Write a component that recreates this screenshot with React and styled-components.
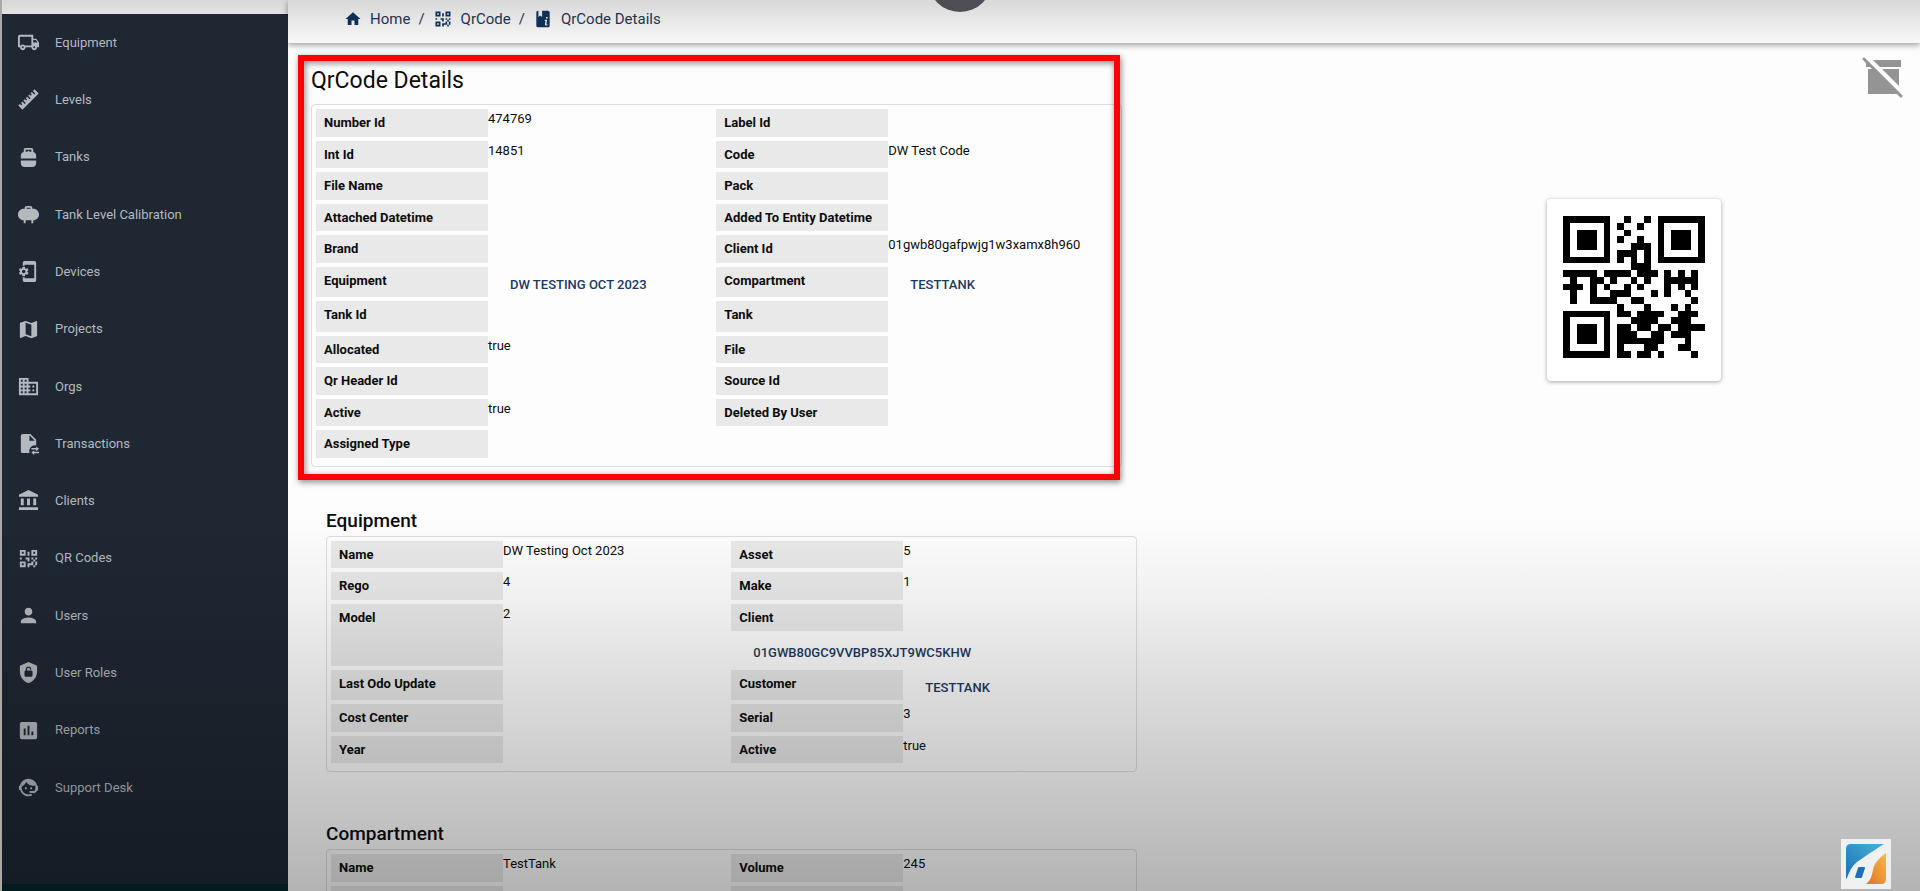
import React from "react";
import styled, { createGlobalStyle } from "styled-components";
import {
  MdOutlineLocalShipping,
  MdPropaneTank,
  MdPropane,
  MdPhonelinkSetup,
  MdMap,
  MdBusiness,
  MdAccountBalance,
  MdPerson,
  MdAssessment,
  MdHome,
} from "react-icons/md";

const GlobalStyle = createGlobalStyle`
  * {
    box-sizing: border-box;
  }
  body {
    margin: 0;
    font-family: Roboto, "Liberation Sans", sans-serif;
    font-size: 13px;
    line-height: 1.5;
    color: #0c0c0c;
    background: #fdfdfd;
  }
`;

const Page = styled.div`
  position: relative;
  display: flex;
  height: 100vh;
  overflow: hidden;
  border-left: 2px solid #a9aaa7;
  background: linear-gradient(#d8d8d8, #f8f8f8 43px, #fdfdfd 43px);
`;

const Sidebar = styled.nav`
  flex: 0 0 286px;
  margin-top: 14px;
  padding-bottom: 75px;
  background: linear-gradient(#1f2733, #1f2733) no-repeat 0 0 / 100% calc(100% - 7px), #04242a;
  z-index: 1;
`;

const NavList = styled.ul`
  display: flex;
  flex-direction: column;
  height: 100%;
  margin: 0;
  padding: 0;
  list-style: none;
`;

const NavItem = styled.li`
  flex: 1;
  display: flex;
`;

const NavLink = styled.a`
  flex: 1;
  display: flex;
  align-items: center;
  gap: 15px;
  padding-left: 15px;
  color: #b4b9c0;
  font-size: 13px;
  text-decoration: none;

  svg {
    width: 23px;
    height: 23px;
  }
`;

const Main = styled.main`
  flex: 1;
  min-width: 0;
`;

const Header = styled.header`
  height: 43px;
  padding: 7px 0 0 56px;
  box-shadow: 0 2px 6px rgba(0, 0, 0, 0.4);
`;

const Breadcrumbs = styled.nav`
  display: flex;
  align-items: center;
  gap: 8px;
  color: #1f3350;
  font-size: 15px;
  line-height: 24px;
`;

const Crumb = styled.a`
  display: flex;
  align-items: center;
  gap: 8px;
  color: inherit;
  text-decoration: none;

  svg {
    width: ${(props) => props.$icon || 20}px;
    height: ${(props) => props.$icon || 20}px;
    color: #0e3054;
  }
`;

const Content = styled.div`
  display: grid;
  grid-template-columns: 6fr 4fr;
  column-gap: 242px;
  padding: 12px 16px 0 23px;
`;

const Highlighted = styled.section`
  position: relative;
`;

const RedFrame = styled.div`
  position: absolute;
  inset: 0 2px -13px -13px;
  border: 6px solid #fe0000;
  filter: drop-shadow(1px 2px 3px rgba(0, 0, 0, 0.5));
  pointer-events: none;
`;

const Title = styled.h1`
  margin: 0;
  padding: 8px 0 5px;
  font-size: 23px;
  font-weight: 400;
  line-height: 36px;
`;

const SubSections = styled.div`
  display: flex;
  flex-direction: column;
  gap: 47px;
  margin: 39px -15px 0 15px;
`;

const SubTitle = styled.h2`
  margin: 0;
  font-size: 19px;
  font-weight: 500;
  line-height: 30px;
`;

const Panel = styled.div`
  display: grid;
  grid-template-columns: 1fr 1fr;
  padding: 4px;
  border: 1px solid rgba(0, 0, 0, 0.12);
  border-radius: 4px;
`;

const Field = styled.div`
  display: flex;
  flex-wrap: wrap;
  min-width: 0;
`;

const Label = styled.div`
  width: 172px;
  margin-bottom: 4px;
  padding: 4px 8px;
  background: #e9e9e9;
  font-weight: 700;
`;

const EntityButton = styled.button`
  padding: 8px 22px 7px;
  border: 0;
  background: none;
  color: #1b3a5f;
  font: inherit;
  font-weight: 500;
  text-transform: uppercase;
`;

const Aside = styled.aside`
  display: flex;
  flex-direction: column;
  align-items: center;
`;

const ArchiveButton = styled.button`
  align-self: flex-end;
  display: flex;
  margin-top: 2px;
  padding: 0;
  border: 0;
  background: none;
  color: #949494;

  svg {
    width: 42px;
    height: 42px;
  }
`;

const QrCard = styled.div`
  margin-top: 100px;
  padding: 17px 16px 23px;
  border-radius: 4px;
  background: #fff;
  box-shadow: 0 1px 4px rgba(0, 0, 0, 0.35);

  svg {
    display: block;
    width: 142px;
    height: 142px;
  }
`;

const Shade = styled.div`
  position: absolute;
  inset: 0;
  background: linear-gradient(
    rgba(0, 0, 0, 0) 58%,
    rgba(0, 0, 0, 0.05) 67%,
    rgba(0, 0, 0, 0.13) 77%,
    rgba(0, 0, 0, 0.2) 87%,
    rgba(0, 0, 0, 0.29) 100%
  );
  pointer-events: none;
  z-index: 2;
`;

const TopBubble = styled.div`
  position: absolute;
  top: -52px;
  left: calc(50% - 33px);
  width: 64px;
  height: 64px;
  border-radius: 50%;
  background: #4c4e53;
`;

const LogoBadge = styled.div`
  position: absolute;
  right: 29px;
  bottom: 2px;
  width: 50px;
  height: 50px;
  padding: 5px;
  background: #eef0f1;
  z-index: 3;

  svg {
    display: block;
  }
`;

const Glyph = ({ d }) => (
  <svg viewBox="0 0 24 24" fill="currentColor" aria-hidden="true">
    <path fillRule="evenodd" d={d} />
  </svg>
);

const RULER =
  "M1.39,18.36L3.16,16.6L4.58,18L5.64,16.95L4.22,15.54L5.64,14.12L8.11,16.6L9.17,15.54L6.7,13.06L8.11,11.65L9.53,13.06L10.59,12L9.17,10.59L10.59,9.17L13.06,11.65L14.12,10.59L11.65,8.11L13.06,6.7L14.47,8.11L15.54,7.05L14.12,5.64L15.54,4.22L18,6.7L19.07,5.64L16.6,3.16L18.36,1.39L22.61,5.64L5.64,22.61L1.39,18.36Z";
const FILE_SWAP =
  "M6,2C4.89,2 4,2.9 4,4V20A2,2 0 0,0 6,22H13.1A6,6 0 0,1 20,14.1V8L14,2H6M13,3.5L18.5,9H13V3.5M20,15L23,17.5L20,20V18.3H15V16.7H20V15M18,19V20.7H23V22.3H18V24L15,21.5L18,19Z";
const QR =
  "M3,11H5V13H3V11M11,5H13V9H11V5M9,11H13V15H11V13H9V11M15,11H17V13H19V11H21V13H19V15H21V19H19V21H17V19H13V21H11V17H15V15H17V13H15V11M19,19V15H17V19H19M15,3H21V9H15V3M17,5V7H19V5H17M3,3H9V9H3V3M5,5V7H7V5H5M3,15H9V21H3V15M5,17V19H7V17H5Z";
const SHIELD_LOCK =
  "M12,1L3,5V11C3,16.55 6.84,21.74 12,23C17.16,21.74 21,16.55 21,11V5L12,1M9.2,10V8.5A2.8,2.8 0 0,1 14.8,8.5V9H13.5V8.5A1.5,1.5 0 0,0 10.5,8.5V10H14.8C15.5,10 16.2,10.7 16.2,11.4V15.2C16.2,15.9 15.5,16.5 14.8,16.5H9.2C8.5,16.5 7.8,15.9 7.8,15.2V11.4C7.8,10.7 8.5,10 9.2,10Z";
const FACE_AGENT =
  "M18.72,14.76C19.07,13.91 19.26,13 19.26,12C19.26,11.28 19.15,10.59 18.96,9.95C18.31,10.1 17.63,10.18 16.92,10.18C13.86,10.18 11.15,8.67 9.5,6.34C8.61,8.5 6.91,10.26 4.77,11.22C4.73,11.47 4.73,11.74 4.73,12A7.27,7.27 0 0,0 12,19.27C13.05,19.27 14.06,19.04 14.97,18.63C15.54,19.72 15.8,20.26 15.78,20.26C14.14,20.81 12.87,21.08 12,21.08C9.58,21.08 7.27,20.13 5.57,18.42C4.53,17.38 3.76,16.11 3.33,14.73H2V10.18H3.09C3.93,6.04 7.6,2.92 12,2.92C14.4,2.92 16.71,3.87 18.42,5.58C19.69,6.84 20.54,8.45 20.89,10.18H22V14.73H21.94L18.38,18L13.08,17.4V15.73H17.91L18.72,14.76M9.27,11.77A1.14,1.14 0 1,1 9.27,14.05A1.14,1.14 0 1,1 9.27,11.77M14.72,11.77A1.14,1.14 0 1,1 14.72,14.05A1.14,1.14 0 1,1 14.72,11.77Z";
const BOOK_INFO =
  "M6,2H6.5V9.5L8.8,7.8L11,9.5V2H18A2,2 0 0,1 20,4V20A2,2 0 0,1 18,22H6A2,2 0 0,1 4,20V4A2,2 0 0,1 6,2M15.6,9.5V11.5H17.6V9.5H15.6M14,13V14.2H15.1L14.4,18.2C14.2,20 16,20.2 17.4,19.4V18.4C16.6,18.8 16,18.7 16.1,18L17,13H14Z";

const navItems = [
  { label: "Equipment", icon: <MdOutlineLocalShipping /> },
  { label: "Levels", icon: <Glyph d={RULER} /> },
  { label: "Tanks", icon: <MdPropaneTank /> },
  { label: "Tank Level Calibration", icon: <MdPropane /> },
  { label: "Devices", icon: <MdPhonelinkSetup /> },
  { label: "Projects", icon: <MdMap /> },
  { label: "Orgs", icon: <MdBusiness /> },
  { label: "Transactions", icon: <Glyph d={FILE_SWAP} /> },
  { label: "Clients", icon: <MdAccountBalance /> },
  { label: "QR Codes", icon: <Glyph d={QR} /> },
  { label: "Users", icon: <MdPerson /> },
  { label: "User Roles", icon: <Glyph d={SHIELD_LOCK} /> },
  { label: "Reports", icon: <MdAssessment /> },
  { label: "Support Desk", icon: <Glyph d={FACE_AGENT} /> },
];

const qrCodeFields = [
  { label: "Number Id", value: "474769" },
  { label: "Label Id" },
  { label: "Int Id", value: "14851" },
  { label: "Code", value: "DW Test Code" },
  { label: "File Name" },
  { label: "Pack" },
  { label: "Attached Datetime" },
  { label: "Added To Entity Datetime" },
  { label: "Brand" },
  { label: "Client Id", value: "01gwb80gafpwjg1w3xamx8h960" },
  { label: "Equipment", entity: "DW Testing Oct 2023" },
  { label: "Compartment", entity: "TestTank" },
  { label: "Tank Id" },
  { label: "Tank", entity: "\u00a0" },
  { label: "Allocated", value: "true" },
  { label: "File" },
  { label: "Qr Header Id" },
  { label: "Source Id" },
  { label: "Active", value: "true" },
  { label: "Deleted By User" },
  { label: "Assigned Type" },
];

const equipmentFields = [
  { label: "Name", value: "DW Testing Oct 2023" },
  { label: "Asset", value: "5" },
  { label: "Rego", value: "4" },
  { label: "Make", value: "1" },
  { label: "Model", value: "2" },
  { label: "Client", entity: "01gwb80gc9vvbp85xjt9wc5khw" },
  { label: "Last Odo Update" },
  { label: "Customer", entity: "TestTank" },
  { label: "Cost Center" },
  { label: "Serial", value: "3" },
  { label: "Year" },
  { label: "Active", value: "true" },
];

const compartmentFields = [
  { label: "Name", value: "TestTank" },
  { label: "Volume", value: "245" },
  { label: "\u00a0" },
  { label: "\u00a0" },
];

const qrModules = [
  "#######..#..#.#######",
  "#.....#.#..#..#.....#",
  "#.###.#..#....#.###.#",
  "#.###.#.#..#..#.###.#",
  "#.###.#...###.#.###.#",
  "#.....#.###.#.#.....#",
  "#######.#.#.#.#######",
  "..........###........",
  "#####.####.###.#.#.#.",
  ".#..##.#..#.#..#####.",
  "###.#.#..#.#...#.#.#.",
  ".#..#..###...#.#..#..",
  ".#..####..##.......#.",
  "........#...#...#.#..",
  "#######.##.####..###.",
  "#.....#...####..###..",
  "#.###.#.##.##.##.####",
  "#.###.#.###..##.###..",
  "#.###.#.#######...#..",
  "#.....#.#...##...##..",
  "#######.##.##.#....#.",
];

const DetailPanel = ({ fields }) => (
  <Panel>
    {fields.map((field, index) => (
      <Field key={index}>
        <Label>{field.label}</Label>
        {field.value && <span>{field.value}</span>}
        {field.entity && <EntityButton type="button">{field.entity}</EntityButton>}
      </Field>
    ))}
  </Panel>
);

const QrCode = () => (
  <svg viewBox="0 0 21 21" shapeRendering="crispEdges" role="img" aria-label="QR code">
    {qrModules.map((row, y) =>
      [...row].map((cell, x) =>
        cell === "#" ? <rect key={`${x}-${y}`} x={x} y={y} width="1" height="1" /> : null
      )
    )}
  </svg>
);

const ArchiveOff = () => (
  <svg viewBox="0 0 42 42" fill="currentColor" aria-hidden="true">
    <path d="M11 3H39V10H18ZM4 5L9 10H4ZM6 12H11L36 37H6ZM20 12H37V29Z" />
    <path d="M2 2L39 39" stroke="currentColor" strokeWidth="3" strokeLinecap="round" />
  </svg>
);

const Logo = () => (
  <svg viewBox="0 0 40 40" width="40" height="40" role="img" aria-label="Logo">
    <defs>
      <linearGradient id="logoBlue" x1="0" y1="1" x2="1" y2="0">
        <stop offset="0" stopColor="#1f6fb5" />
        <stop offset="1" stopColor="#45b4d8" />
      </linearGradient>
      <linearGradient id="logoOrange" x1="0" y1="1" x2="1" y2="0">
        <stop offset="0" stopColor="#e2722c" />
        <stop offset="1" stopColor="#f3bd3c" />
      </linearGradient>
    </defs>
    <path d="M5 0H38C30 5 21 11 14 16C7 20 4 26 1 34L0 35V5Q0 0 5 0Z" fill="url(#logoBlue)" />
    <path d="M40 9V35Q40 40 35 40H20C25 36 26 31 27 26C28 20 32 15 40 9Z" fill="url(#logoOrange)" />
    <path d="M13 24H18L15 33H10Z" fill="#1f6fb5" stroke="#1f6fb5" strokeWidth="2" strokeLinejoin="round" />
  </svg>
);

const App = () => {
  return (
    <Page>
      <GlobalStyle />
      <Sidebar aria-label="Main">
        <NavList>
          {navItems.map((item) => (
            <NavItem key={item.label}>
              <NavLink href="#">
                {item.icon}
                {item.label}
              </NavLink>
            </NavItem>
          ))}
        </NavList>
      </Sidebar>
      <Main>
        <Header>
          <Breadcrumbs aria-label="Breadcrumb">
            <Crumb href="#" $icon={18}>
              <MdHome />
              Home
            </Crumb>
            <span>/</span>
            <Crumb href="#">
              <Glyph d={QR} />
              QrCode
            </Crumb>
            <span>/</span>
            <Crumb href="#">
              <Glyph d={BOOK_INFO} />
              QrCode Details
            </Crumb>
          </Breadcrumbs>
        </Header>
        <Content>
          <div>
            <Highlighted>
              <Title>QrCode Details</Title>
              <DetailPanel fields={qrCodeFields} />
              <RedFrame />
            </Highlighted>
            <SubSections>
              <section>
                <SubTitle>Equipment</SubTitle>
                <DetailPanel fields={equipmentFields} />
              </section>
              <section>
                <SubTitle>Compartment</SubTitle>
                <DetailPanel fields={compartmentFields} />
              </section>
            </SubSections>
          </div>
          <Aside>
            <ArchiveButton type="button" aria-label="Unarchive">
              <ArchiveOff />
            </ArchiveButton>
            <QrCard>
              <QrCode />
            </QrCard>
          </Aside>
        </Content>
      </Main>
      <TopBubble />
      <Shade />
      <LogoBadge>
        <Logo />
      </LogoBadge>
    </Page>
  );
};

export default App;
